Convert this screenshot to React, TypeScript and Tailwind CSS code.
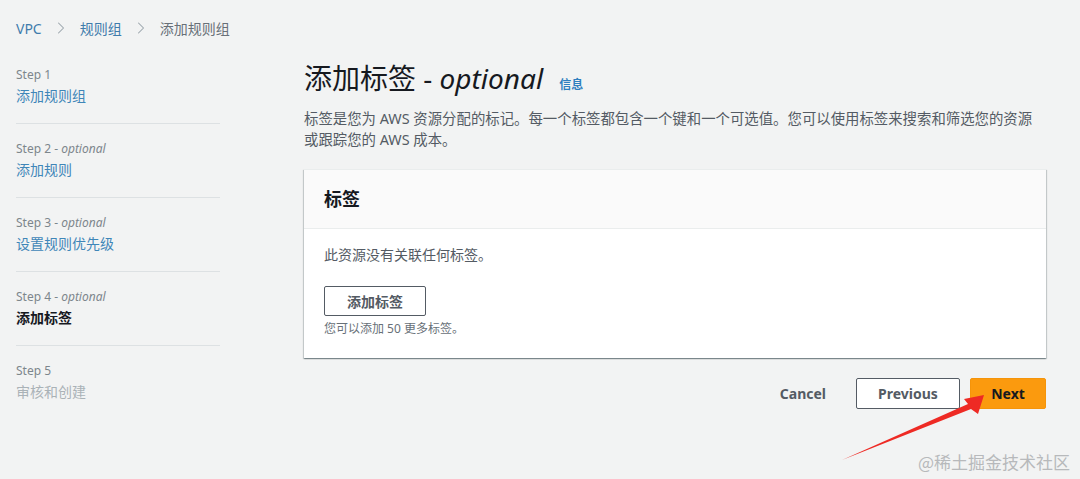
import { ChevronRight } from "lucide-react";

const steps = [
    { step: "Step 1", optional: false, label: "添加规则组", state: "link" },
    { step: "Step 2", optional: true, label: "添加规则", state: "link" },
    { step: "Step 3", optional: true, label: "设置规则优先级", state: "link" },
    { step: "Step 4", optional: true, label: "添加标签", state: "active" },
    { step: "Step 5", optional: false, label: "审核和创建", state: "disabled" },
];

export default function App() {
    return (
        <div
            className="relative h-[479px] w-[1080px] overflow-hidden bg-[#f2f3f3] text-[#16191f]"
            style={{ fontFamily: '"Noto Sans", "Open Sans", "Noto Sans CJK SC", sans-serif' }}
        >
            {/* Breadcrumb */}
            <div className="flex h-[56px] items-center pl-[16px] text-[14px]">
                <span className="text-[#3f7cac]">VPC</span>
                <ChevronRight className="mx-[9px] h-[20px] w-[20px] text-[#9aa4ab]" strokeWidth={1.25} />
                <span className="text-[#3f7cac]">规则组</span>
                <ChevronRight className="mx-[9px] h-[20px] w-[20px] text-[#9aa4ab]" strokeWidth={1.25} />
                <span className="text-[#687078]">添加规则组</span>
            </div>

            <div className="flex">
                {/* Steps nav */}
                <div className="ml-[16px] mt-[10px] w-[204px]">
                    {steps.map((s, i) => (
                        <div
                            key={s.step}
                            className={`flex flex-col ${
                                i < steps.length - 1 ? "border-b border-[#dde1e3] pb-[16px]" : ""
                            } ${i > 0 ? "pt-[16px]" : ""}`}
                        >
                            <div className="text-[12px] leading-[18px] text-[#7d868c]">
                                {s.step}
                                {s.optional && (
                                    <>
                                        {" - "}
                                        <i>optional</i>
                                    </>
                                )}
                            </div>
                            <div
                                className={`text-[14px] leading-[23px] ${
                                    s.state === "active"
                                        ? "font-bold text-[#16191f]"
                                        : s.state === "disabled"
                                          ? "text-[#aab2b7]"
                                          : "text-[#3f86b8]"
                                }`}
                            >
                                {s.label}
                            </div>
                        </div>
                    ))}
                </div>

                {/* Main */}
                <div className="ml-[84px] w-[742px]">
                    <div className="-mt-[2px] flex items-baseline">
                        <h1 className="text-[28px] leading-[48px] text-[#16191f]">
                            添加标签 - <i>optional</i>
                        </h1>
                        <span className="ml-[16px] text-[12px] font-bold text-[#2f7fbf]">信息</span>
                    </div>
                    <p className="mt-[6px] pr-[8px] text-[14.4px] leading-[21px] text-[#545b64]">
                        标签是您为 AWS 资源分配的标记。每一个标签都包含一个键和一个可选值。您可以使用标签来搜索和筛选您的资源或跟踪您的 AWS 成本。
                    </p>

                    {/* Card */}
                    <div className="mt-[19px] border-t border-[#eaeded] bg-white shadow-[0_1px_1px_0_rgba(0,28,36,0.3),1px_1px_1px_0_rgba(0,28,36,0.15),-1px_1px_1px_0_rgba(0,28,36,0.15)]">
                        <div className="flex h-[59px] items-center border-b border-[#eaeded] bg-[#fafafa] px-[20px]">
                            <h2 className="text-[18px] font-bold text-[#16191f]">标签</h2>
                        </div>
                        <div className="px-[20px] pb-[20px] pt-[15px]">
                            <p className="text-[14px] leading-[22px] text-[#545b64]">此资源没有关联任何标签。</p>
                            <button
                                type="button"
                                className="mt-[20px] h-[30px] w-[102px] rounded-[2px] border border-[#545b64] bg-white text-[14px] font-bold text-[#545b64]"
                            >
                                添加标签
                            </button>
                            <p className="mt-[4px] text-[12px] leading-[18px] text-[#687078]">您可以添加 50 更多标签。</p>
                        </div>
                    </div>

                    {/* Actions */}
                    <div className="mt-[20px] flex items-center justify-end">
                        <button type="button" className="px-[10px] text-[14px] font-bold text-[#545b64]">
                            Cancel
                        </button>
                        <button
                            type="button"
                            className="ml-[20px] h-[31px] w-[104px] rounded-[2px] border border-[#545b64] bg-white text-[14px] font-bold text-[#545b64]"
                        >
                            Previous
                        </button>
                        <button
                            type="button"
                            className="ml-[10px] h-[31px] w-[76px] rounded-[2px] border border-[#f5940a] bg-[#fb9a0e] text-[14px] font-bold text-[#16191f]"
                        >
                            Next
                        </button>
                    </div>
                </div>
            </div>

            {/* Red arrow annotation */}
            <svg className="pointer-events-none absolute left-0 top-0" width="1080" height="479" viewBox="0 0 1080 479">
                <polygon
                    points="842,460 971,409 978,414 984,395 964,399 968,404"
                    fill="#ee2a24"
                />
            </svg>

            {/* Watermark */}
            <div
                className="absolute bottom-[5px] right-[10px] text-[17px] text-[#b7b9bb]"
                style={{ fontFamily: '"Noto Sans CJK SC", sans-serif' }}
            >
                @稀土掘金技术社区
            </div>
        </div>
    );
}
